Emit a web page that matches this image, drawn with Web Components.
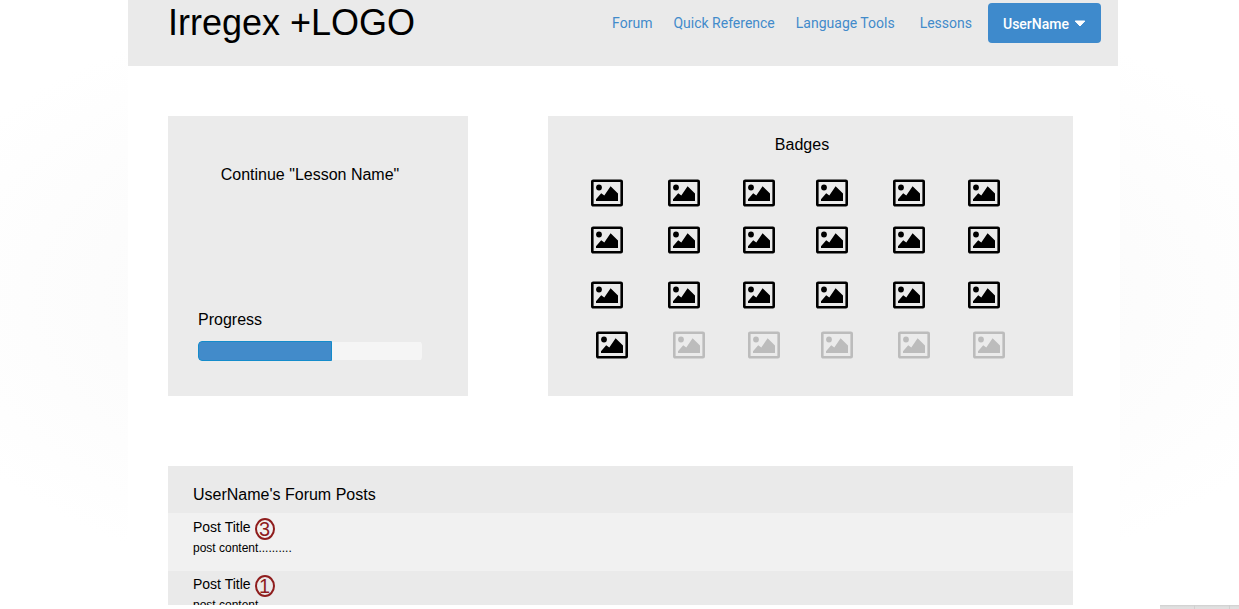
<!DOCTYPE html>
<html lang="en">
<head>
<meta charset="utf-8">
<title>Irregex</title>
<style>
  body { margin: 0; font-family: "Liberation Sans", Arial, sans-serif; color: #000; }
</style>
</head>
<body>
<app-stage>
  <site-header slot="header" brand="Irregex +LOGO">
    <nav-link href="#forum">Forum</nav-link>
    <nav-link href="#reference">Quick Reference</nav-link>
    <nav-link href="#tools">Language Tools</nav-link>
    <nav-link href="#lessons" class="last">Lessons</nav-link>
    <user-menu slot="user">UserName</user-menu>
  </site-header>
  <lesson-card slot="lesson" value="60">Continue "Lesson Name"</lesson-card>
  <badge-board slot="badges">Badges</badge-board>
  <forum-posts slot="posts">
    <span slot="heading">UserName's Forum Posts</span>
    <forum-post replies="3" class="alt">Post Title<span slot="body">post content..........</span></forum-post>
    <forum-post replies="1">Post Title<span slot="body">post content..........</span></forum-post>
  </forum-posts>
</app-stage>
<script>
const define = (name, html, setup) => {
  const template = document.createElement('template');
  template.innerHTML = html;
  customElements.define(name, class extends HTMLElement {
    constructor() {
      super();
      this.attachShadow({ mode: 'open' }).append(template.content.cloneNode(true));
    }
    connectedCallback() { if (setup) setup(this, this.shadowRoot); }
  });
};

define('app-stage', `
  <style>
    :host { display: flex; flex-direction: column; height: 100vh; overflow: hidden; background: #fff; }
    .canvas { flex: 1; min-height: 0; overflow: hidden; padding: 0 119px 0 128px;
      background: radial-gradient(ellipse 60% 55% at 50% 49%, #f5f5f5, #fff); }
    .page { min-height: 100%; background: #fff; }
    main { display: grid; grid-template-columns: 300fr 525fr; column-gap: 80px; row-gap: 70px; padding: 50px 47px 0 40px; }
    .wide { grid-column: 1 / -1; }
    .dock { display: flex; gap: 1px; align-self: flex-end; width: 79px; height: 4px; background: #d0d0d0; }
    .dock i { flex: 0 0 34px; background: linear-gradient(#cfcfcf, #e0e0e0 2px); }
    .dock i:last-child { flex: 1; }
  </style>
  <div class="canvas"><div class="page">
    <slot name="header"></slot>
    <main>
      <slot name="lesson"></slot>
      <slot name="badges"></slot>
      <div class="wide"><slot name="posts"></slot></div>
    </main>
  </div></div>
  <div class="dock"><i></i><i></i><i></i></div>
`);

define('site-header', `
  <style>
    :host { display: block; margin-right: 2px; }
    header { display: flex; justify-content: space-between; align-items: flex-start; height: 66px;
      box-sizing: border-box; padding: 3px 17px 0 40px; background: #eaeaea; }
    h1 { margin: 0; font-size: 36px; line-height: 40px; font-weight: 400; white-space: nowrap; }
    .right { display: flex; align-items: center; gap: 16px; height: 40px; }
    nav { display: flex; gap: 21px; }
  </style>
  <header><h1></h1><div class="right"><nav><slot></slot></nav><slot name="user"></slot></div></header>
`, (host, root) => { root.querySelector('h1').textContent = host.getAttribute('brand'); });

define('nav-link', `
  <style>
    :host { display: block; }
    :host(.last) { margin-left: 4px; }
    a { display: block; font: 14px/20px Roboto, sans-serif; color: #428bca; text-decoration: none; white-space: nowrap; }
  </style>
  <a><slot></slot></a>
`, (host, root) => { root.querySelector('a').href = host.getAttribute('href'); });

define('user-menu', `
  <style>
    :host { display: block; }
    button { display: flex; align-items: center; justify-content: center; gap: 5px; min-width: 113px; height: 40px; padding: 2px 14px 0;
      border: 0; border-radius: 4px; background: #3e8acc; color: #fff; font: 500 14px/20px Roboto, sans-serif; white-space: nowrap; }
    svg { display: block; }
  </style>
  <button type="button" aria-haspopup="true"><slot></slot>
    <svg width="12" height="8" viewBox="0 0 12 8" aria-hidden="true"><path d="M1.2 1h9.600L6 6z" fill="#fff" stroke="#fff" stroke-linejoin="round"/></svg>
  </button>
`);

define('lesson-card', `
  <style>
    :host { display: flex; flex-direction: column; box-sizing: border-box; height: 280px; padding: 49px 46px 35px 30px; background: #ebebeb; }
    h2 { margin: 0 0 auto; font-size: 16px; line-height: 20px; font-weight: 400; text-align: center; }
    label { margin-bottom: 11px; font-size: 16px; line-height: 20px; }
    progress { display: block; width: 100%; height: 20px; border: 0; border-radius: 4px; overflow: hidden; appearance: none; -webkit-appearance: none; background: none; }
    progress::-webkit-progress-bar { border-radius: 4px; background: linear-gradient(#f5f5f5, #f5f5f5) 0 1px / 100% 18px no-repeat; }
    progress::-webkit-progress-value { box-sizing: border-box; border: 1px solid #148ccb; border-radius: 4px 0 0 4px; background: #428bca; }
  </style>
  <h2><slot></slot></h2>
  <label for="done">Progress</label>
  <progress id="done" max="100"></progress>
`, (host, root) => { root.querySelector('progress').value = Number(host.getAttribute('value')); });

define('picture-badge', `
  <style>
    :host { display: block; color: #000; }
    :host([locked]) { color: #bcbcbc; }
    svg { display: block; }
  </style>
  <svg width="32" height="28" viewBox="0 0 32 28" role="img" aria-label="Badge">
    <rect x="1.300" y="1.700" width="29.400" height="24.500" rx="0.800" fill="none" stroke="currentColor" stroke-width="2.600"/>
    <circle cx="8" cy="8.500" r="2.900" fill="currentColor"/>
    <path d="M5 22v-1.800l5.200-6 3.100 2.300L19.600 7.200 27 14.500V22z" fill="currentColor"/>
  </svg>
`);

define('badge-board', `
  <style>
    :host { display: block; box-sizing: border-box; height: 280px; padding: 19px 73px 0 43px; background: #ebebeb; }
    h2 { margin: 0 -13px 24px 0; font-size: 16px; line-height: 20px; font-weight: 400; text-align: center; }
    .row { display: grid; grid-template-columns: 77fr 75fr 73fr 77fr 75fr 32fr; height: 28px; margin-bottom: 19px; }
    .row:nth-of-type(2) { margin-bottom: 27px; }
    .row:nth-of-type(3) { margin-bottom: 22px; }
    .row:nth-of-type(4) { margin: 0 -5px 0 5px; }
  </style>
  <h2><slot></slot></h2>
`, (host, root) => {
  for (let r = 0; r < 4; r++) {
    const row = document.createElement('div');
    row.className = 'row';
    for (let c = 0; c < 6; c++) {
      const badge = document.createElement('picture-badge');
      badge.toggleAttribute('locked', r === 3 && c > 0);
      row.append(badge);
    }
    root.append(row);
  }
});

define('forum-posts', `
  <style>
    :host { display: block; background: #eaeaea; }
    h2 { margin: 0; padding: 19px 25px 8px; font-size: 16px; line-height: 20px; font-weight: 400; }
  </style>
  <section><h2><slot name="heading"></slot></h2><slot></slot></section>
`);

define('forum-post', `
  <style>
    :host { display: block; box-sizing: border-box; height: 58px; padding: 3px 25px 0; background: #eaeaea; }
    :host(.alt) { padding-top: 4px; background: #f1f1f1; }
    .title { display: flex; align-items: flex-start; gap: 4px; height: 22px; font-size: 14px; line-height: 20px; }
    .count { box-sizing: border-box; width: 20px; height: 22px; margin-top: 1px; border: 2px solid #8f1d1d; border-radius: 50%;
      display: flex; justify-content: center; color: #8f1d1d; font-size: 20px; line-height: 18px; }
    p { margin: 0; font-size: 12px; line-height: 18px; }
  </style>
  <div class="title"><span><slot></slot></span><span class="count"></span></div>
  <p><slot name="body"></slot></p>
`, (host, root) => { root.querySelector('.count').textContent = host.getAttribute('replies'); });
</script>
</body>
</html>
